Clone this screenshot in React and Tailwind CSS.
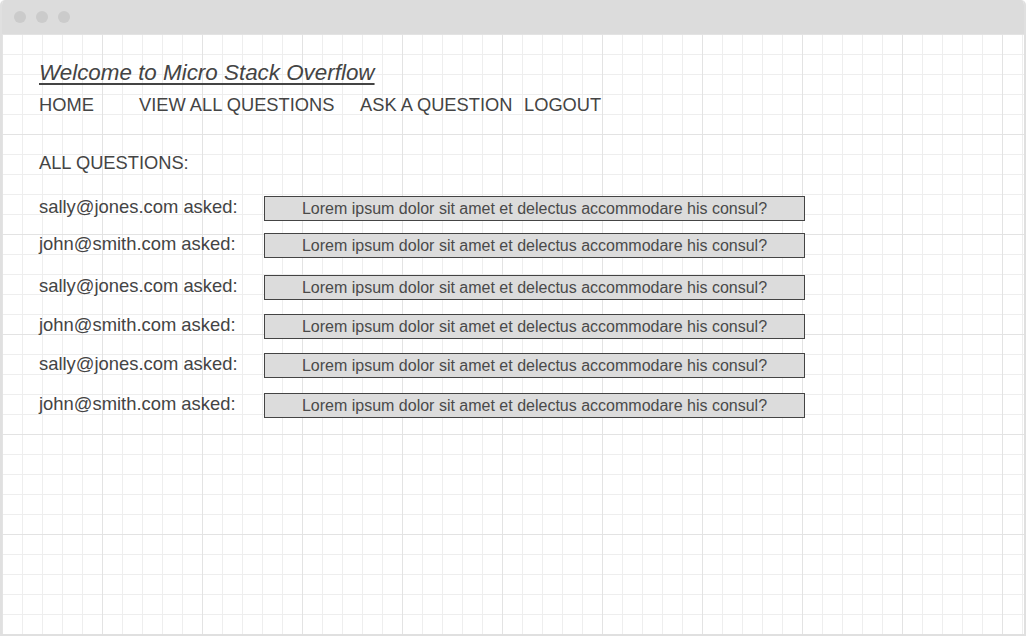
const rows = [
  { email: 'sally@jones.com', mt: 'mt-[22px]' },
  { email: 'john@smith.com', mt: 'mt-[12px]' },
  { email: 'sally@jones.com', mt: 'mt-[17px]' },
  { email: 'john@smith.com', mt: 'mt-[14px]' },
  { email: 'sally@jones.com', mt: 'mt-[14px]' },
  { email: 'john@smith.com', mt: 'mt-[15px]' },
];

const question = 'Lorem ipsum dolor sit amet et delectus accommodare his consul?';

export default function App() {
  return (
    <div className="h-[636px] w-[1026px] bg-white font-['Liberation_Sans',Arial,sans-serif] text-[#444]">
      <div className="flex h-full flex-col overflow-hidden rounded-t-[5px] border-2 border-t-0 border-[#e0e0e0]">
        {/* Title bar */}
        <div className="flex h-[34px] shrink-0 items-center gap-[10px] bg-[#dcdcdc] pl-[12px]">
          <span className="h-[12px] w-[12px] rounded-full bg-[#cbcbcb]" />
          <span className="h-[12px] w-[12px] rounded-full bg-[#cbcbcb]" />
          <span className="h-[12px] w-[12px] rounded-full bg-[#cbcbcb]" />
        </div>

        {/* Canvas */}
        <div className="flex-1 bg-[linear-gradient(to_right,#e3e3e3_1px,transparent_1px),linear-gradient(to_bottom,#e3e3e3_1px,transparent_1px),linear-gradient(to_right,#eeeeee_1px,transparent_1px),linear-gradient(to_bottom,#eeeeee_1px,transparent_1px)] bg-[size:100px_100px,100px_100px,20px_20px,20px_20px] pl-[37px] pt-[26px]">
          <h1 className="text-[22.4px] italic leading-[26px] underline decoration-[2px] underline-offset-[3px]">
            Welcome to Micro Stack Overflow
          </h1>

          <nav className="mt-[8px] flex text-[18.3px] leading-[22px]">
            <span className="w-[100px]">HOME</span>
            <span className="w-[221px]">VIEW ALL QUESTIONS</span>
            <span className="w-[164px]">ASK A QUESTION</span>
            <span>LOGOUT</span>
          </nav>

          <div className="mt-[36px] text-[18.3px] leading-[22px]">ALL QUESTIONS:</div>

          <div className="flex flex-col">
            {rows.map((r, i) => (
              <div key={i} className={`flex items-start ${r.mt}`}>
                <span className="w-[225px] text-[18.4px] leading-[22px]">{r.email} asked:</span>
                <div className="flex h-[25px] w-[541px] items-center justify-center border border-[#444] bg-[#dcdcdc] pt-[1px] text-[16px] text-[#4a4a4a]">
                  {question}
                </div>
              </div>
            ))}
          </div>
        </div>
      </div>
    </div>
  );
}
